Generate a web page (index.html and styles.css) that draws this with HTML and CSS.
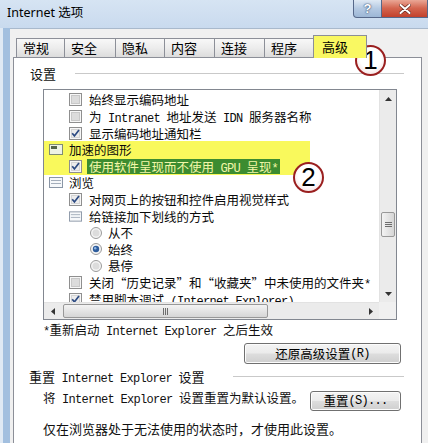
FILE: index.html
```html
<!DOCTYPE html>
<html lang="zh-CN">
<head>
<meta charset="utf-8">
<title>Internet 选项</title>
<link rel="stylesheet" href="styles.css">
</head>
<body>
<div class="window">
  <div class="titlebar">
    <div class="title">Internet 选项</div>
    <div class="caption">
      <div class="cbtn help">?</div>
      <div class="cbtn close">
        <svg width="12" height="10" viewBox="0 0 12 10"><path d="M1.5 1l9 8M10.5 1l-9 8" stroke="#6a2a20" stroke-width="3.4" stroke-linecap="round"/><path d="M1.5 1l9 8M10.5 1l-9 8" stroke="#fff" stroke-width="2" stroke-linecap="round"/></svg>
      </div>
    </div>
  </div>
  <div class="frame">
    <div class="frame-left"></div>
    <div class="dialog">
      <div class="tabs">
        <div class="tab">常规</div>
        <div class="tab">安全</div>
        <div class="tab">隐私</div>
        <div class="tab">内容</div>
        <div class="tab">连接</div>
        <div class="tab">程序</div>
        <div class="tab active">高级</div>
      </div>
      <div class="panel">
        <div class="group-head settings-head"><span>设置</span><span class="rule"></span></div>
        <div class="listbox">
          <div class="list-view">
            <div class="row opt"><svg class="cb" viewBox="0 0 13 13"><rect x=".5" y=".5" width="12" height="12" fill="#f7f7f7" stroke="#8f8f8f"/><rect x="2.5" y="2.5" width="8" height="8" fill="#dcdcdc" stroke="#c8c8c8"/></svg><span class="txt">始终显示编码地址</span></div>
            <div class="row opt"><svg class="cb" viewBox="0 0 13 13"><rect x=".5" y=".5" width="12" height="12" fill="#f7f7f7" stroke="#8f8f8f"/><rect x="2.5" y="2.5" width="8" height="8" fill="#dcdcdc" stroke="#c8c8c8"/></svg><span class="txt">为<span class="en"> Intranet </span>地址发送<span class="en"> IDN </span>服务器名称</span></div>
            <div class="row opt"><svg class="cb" viewBox="0 0 13 13"><rect x=".5" y=".5" width="12" height="12" fill="#f7f7f7" stroke="#8f8f8f"/><rect x="2.5" y="2.5" width="8" height="8" fill="#ececec" stroke="#d4d4d4"/><path d="M3.2 6.3l2.2 2.6 4.6-6" fill="none" stroke="#2c4a82" stroke-width="1.7"/></svg><span class="txt">显示编码地址通知栏</span></div>
            <div class="hl">
              <div class="row cat"><svg class="ico" viewBox="0 0 14 11"><rect x=".5" y=".5" width="13" height="10" fill="#eef2e4" stroke="#7f8c74"/><rect x="2" y="2" width="6" height="3" fill="#55644a"/></svg><span class="txt">加速的图形</span></div>
              <div class="row opt"><svg class="cb" viewBox="0 0 13 13"><rect x=".5" y=".5" width="12" height="12" fill="#f7f7f7" stroke="#8f8f8f"/><rect x="2.5" y="2.5" width="8" height="8" fill="#ececec" stroke="#d4d4d4"/><path d="M3.2 6.3l2.2 2.6 4.6-6" fill="none" stroke="#2c4a82" stroke-width="1.7"/></svg><span class="txt sel">使用软件呈现而不使用<span class="en"> GPU </span>呈现<span class="en">*</span></span></div>
            </div>
            <div class="row cat"><svg class="ico" viewBox="0 0 14 11"><rect x=".5" y=".5" width="13" height="10" fill="#f6f8fa" stroke="#8a96a6"/><path d="M2 3.5h10M2 6.5h10" stroke="#a4aebb"/></svg><span class="txt">浏览</span></div>
            <div class="row opt"><svg class="cb" viewBox="0 0 13 13"><rect x=".5" y=".5" width="12" height="12" fill="#f7f7f7" stroke="#8f8f8f"/><rect x="2.5" y="2.5" width="8" height="8" fill="#ececec" stroke="#d4d4d4"/><path d="M3.2 6.3l2.2 2.6 4.6-6" fill="none" stroke="#2c4a82" stroke-width="1.7"/></svg><span class="txt">对网页上的按钮和控件启用视觉样式</span></div>
            <div class="row opt"><svg class="ico" viewBox="0 0 14 11"><rect x=".5" y=".5" width="13" height="10" fill="#f6f8fa" stroke="#8a96a6"/><path d="M2 3.5h10M2 6.5h10" stroke="#a4aebb"/></svg><span class="txt">给链接加下划线的方式</span></div>
            <div class="row rad"><svg class="rd" viewBox="0 0 12 12"><circle cx="6" cy="6" r="5.5" fill="#f4f4f4" stroke="#9a9a9a"/><circle cx="6" cy="6" r="3.5" fill="#dcdcdc"/></svg><span class="txt">从不</span></div>
            <div class="row rad"><svg class="rd" viewBox="0 0 12 12"><circle cx="6" cy="6" r="5.5" fill="#f4f4f4" stroke="#9a9a9a"/><circle cx="6" cy="6" r="3.2" fill="#2d5c9c"/><circle cx="5.2" cy="5.2" r="1.2" fill="#8fb6e4"/></svg><span class="txt">始终</span></div>
            <div class="row rad"><svg class="rd" viewBox="0 0 12 12"><circle cx="6" cy="6" r="5.5" fill="#f4f4f4" stroke="#9a9a9a"/><circle cx="6" cy="6" r="3.5" fill="#dcdcdc"/></svg><span class="txt">悬停</span></div>
            <div class="row opt"><svg class="cb" viewBox="0 0 13 13"><rect x=".5" y=".5" width="12" height="12" fill="#f7f7f7" stroke="#8f8f8f"/><rect x="2.5" y="2.5" width="8" height="8" fill="#dcdcdc" stroke="#c8c8c8"/></svg><span class="txt">关闭“历史记录”和“收藏夹”中未使用的文件夹<span class="en">*</span></span></div>
            <div class="row opt"><svg class="cb" viewBox="0 0 13 13"><rect x=".5" y=".5" width="12" height="12" fill="#f7f7f7" stroke="#8f8f8f"/><rect x="2.5" y="2.5" width="8" height="8" fill="#ececec" stroke="#d4d4d4"/><path d="M3.2 6.3l2.2 2.6 4.6-6" fill="none" stroke="#2c4a82" stroke-width="1.7"/></svg><span class="txt">禁用脚本调试<span class="en"> (Internet Explorer)</span></span></div>
          </div>
          <div class="vscroll">
            <div class="sbtn"><svg width="7" height="4" viewBox="0 0 7 4"><path d="M0 4L3.5 0 7 4z" fill="#333"/></svg></div>
            <div class="vtrack"><div class="vthumb"><svg width="7" height="6" viewBox="0 0 7 6"><path d="M0 .5h7M0 2.5h7M0 4.5h7" stroke="#6d6d6d"/></svg></div></div>
            <div class="sbtn"><svg width="7" height="4" viewBox="0 0 7 4"><path d="M0 0L3.5 4 7 0z" fill="#333"/></svg></div>
          </div>
          <div class="hscroll">
            <div class="sbtn"><svg width="4" height="7" viewBox="0 0 4 7"><path d="M4 0L0 3.5 4 7z" fill="#333"/></svg></div>
            <div class="htrack"><div class="hthumb"><svg width="6" height="7" viewBox="0 0 6 7"><path d="M.5 0v7M2.5 0v7M4.5 0v7" stroke="#6d6d6d"/></svg></div></div>
            <div class="sbtn"><svg width="4" height="7" viewBox="0 0 4 7"><path d="M0 0L4 3.5 0 7z" fill="#333"/></svg></div>
          </div>
          <div class="corner"></div>
        </div>
        <div class="note"><span class="en">*</span>重新启动<span class="en"> Internet Explorer </span>之后生效</div>
        <div class="btn-row"><div class="btn restore">还原高级设置<span class="en">(R)</span></div></div>
        <div class="group-head reset-head"><span>重置<span class="en"> Internet Explorer </span>设置</span><span class="rule short"></span></div>
        <div class="reset-row"><span class="reset-text">将<span class="en"> Internet Explorer </span>设置重置为默认设置。</span><div class="btn reset">重置<span class="en">(S)...</span></div></div>
        <div class="hint">仅在浏览器处于无法使用的状态时，才使用此设置。</div>
      </div>
    </div>
  </div>
  <div class="marker m1">1</div>
  <div class="marker m2">2</div>
</div>
</body>
</html>
```

FILE: styles.css
```css
* { box-sizing: border-box; }
html, body { margin: 0; padding: 0; }
body {
  width: 428px;
  height: 443px;
  overflow: hidden;
  background: #f0f0f0;
  font-family: "Noto Sans CJK SC", sans-serif;
  color: #111;
}
.window {
  position: relative;
  width: 428px;
  height: 443px;
  display: flex;
  flex-direction: column;
  overflow: hidden;
}
.titlebar {
  height: 28px;
  flex: none;
  display: flex;
  justify-content: space-between;
  align-items: flex-start;
  background: linear-gradient(#d6e4f3, #c9daee);
}
.title {
  font-family: "Noto Sans", "Noto Sans CJK SC", sans-serif;
  font-size: 12.5px;
  line-height: 26px;
  padding-left: 7px;
  color: #000;
}
.caption { display: flex; }
.cbtn {
  height: 18px;
  display: flex;
  align-items: center;
  justify-content: center;
  border: 1px solid #56688a;
  border-top: none;
}
.help {
  width: 29px;
  border-radius: 0 0 0 4px;
  background: linear-gradient(#dfe9f4, #b4c9e2 50%, #9db7d6);
  color: #fff;
  font-family: "Liberation Sans", sans-serif;
  font-weight: bold;
  font-size: 13px;
  line-height: 16px;
  text-shadow: 0 0 2px #34486a, 0 0 1px #34486a;
}
.close {
  width: 46px;
  border-left: none;
  background: linear-gradient(#eaa796, #d4654f 48%, #c2412c);
}
.frame { flex: 1; display: flex; }
.frame-left {
  width: 10px;
  flex: none;
  background: linear-gradient(90deg, #dfe9f4 0 3px, #a2bfdf 3px 10px);
}
.dialog {
  flex: 1;
  background: #f0f0f0;
  border-top: 1px solid #a9b9cc;
  padding: 6px 0 0 3px;
}
.tabs {
  display: flex;
  align-items: flex-end;
  height: 22px;
  padding-left: 3px;
  position: relative;
  z-index: 1;
}
.tab {
  height: 19px;
  border: 1px solid #8c8f98;
  border-bottom: none;
  margin-right: -1px;
  background: linear-gradient(#f8f8f8, #ececec 50%, #dcdcdc);
  font-size: 13px;
  line-height: 18px;
  padding-left: 6px;
  color: #000;
}
.tab:nth-child(1) { width: 49px; }
.tab:nth-child(2) { width: 52px; }
.tab:nth-child(3) { width: 50px; }
.tab:nth-child(4) { width: 51px; }
.tab:nth-child(5) { width: 51px; }
.tab:nth-child(6) { width: 50px; }
.tab.active {
  width: 54px;
  height: 23px;
  margin-bottom: -1px;
  background: #f9f862;
  padding-left: 8px;
  line-height: 21px;
}
.panel {
  width: 409px;
  height: 400px;
  border: 1px solid #8c8f98;
  background: #fff;
}
.group-head {
  display: flex;
  align-items: center;
  font-size: 13px;
  line-height: 16px;
}
.settings-head { padding: 8px 17px 0 16px; }
.settings-head .rule { flex: 1; margin-left: 19px; }
.rule {
  height: 2px;
  border-top: 1px solid #c9c9c9;
  border-bottom: 1px solid #fff;
}
.rule.short { width: 171px; margin-left: auto; margin-right: 17px; margin-top: -3px; }
.listbox {
  margin: 7px 0 0 29px;
  width: 354px;
  height: 231px;
  border: 1px solid #828790;
  display: grid;
  grid-template-columns: 335px 17px;
  grid-template-rows: 212px 17px;
}
.list-view {
  overflow: hidden;
  padding-top: 1.7px;
  font-size: 12.5px;
  color: #0a0a0a;
}
.row {
  height: 16.6px;
  display: flex;
  align-items: center;
  white-space: nowrap;
  line-height: 15px;
}
.txt { display: inline-block; height: 15px; line-height: 15px; }
.row.cat { padding-left: 5px; }
.row.opt { padding-left: 25px; }
.row.rad { padding-left: 46px; }
.cb { width: 13px; height: 13px; margin-right: 7px; flex: none; }
.ico { width: 14px; height: 11px; margin-right: 6px; flex: none; }
.row.opt .ico { width: 13px; margin-right: 7px; }
.rd { width: 12px; height: 12px; margin-right: 6px; flex: none; }
.hl { width: 266px; background: #f9f95c; }
.sel {
  background: #3c8c30;
  color: #f3f7a8;
  padding: 0 2px;
  margin-left: -2px;
}
.en {
  font-family: "Liberation Mono", monospace;
  font-size: 12px;
  letter-spacing: -0.7px;
}
.vscroll {
  display: flex;
  flex-direction: column;
  background: #ebebeb;
  border-left: 1px solid #e2e2e2;
}
.hscroll {
  display: flex;
  background: #ebebeb;
  border-top: 1px solid #e2e2e2;
}
.sbtn {
  width: 16px;
  height: 17px;
  flex: none;
  display: flex;
  align-items: center;
  justify-content: center;
}
.hscroll .sbtn { width: 17px; height: 16px; }
.vtrack { flex: 1; padding: 105px 1px 0 1px; }
.vthumb {
  height: 25px;
  border: 1px solid #989898;
  border-radius: 2px;
  background: linear-gradient(90deg, #f3f3f3, #e4e4e4 50%, #d6d6d6);
  display: flex;
  align-items: center;
  justify-content: center;
}
.htrack { flex: 1; padding: 1px 0 0 2px; }
.hthumb {
  width: 205px;
  height: 14px;
  border: 1px solid #989898;
  border-radius: 2px;
  background: linear-gradient(#f3f3f3, #e4e4e4 50%, #d6d6d6);
  display: flex;
  align-items: center;
  justify-content: center;
}
.corner { background: #f0f0f0; }
.note {
  margin-top: 2px;
  padding-left: 29px;
  font-size: 12.5px;
  line-height: 16px;
}
.btn-row { display: flex; margin-top: 3px; }
.btn {
  height: 21px;
  border: 1px solid #707070;
  border-radius: 3px;
  background: linear-gradient(#f4f4f4, #ebebeb 48%, #dddddd 52%, #cfcfcf);
  box-shadow: inset 0 0 0 1px #fcfcfc;
  display: flex;
  align-items: center;
  justify-content: center;
  font-size: 12.5px;
  line-height: 16px;
  color: #000;
}
.restore { width: 157px; margin-left: auto; margin-right: 20px; }
.reset-head { margin-top: 5px; padding-left: 15px; }
.reset-row {
  display: flex;
  align-items: flex-start;
  margin-top: 3px;
  padding-left: 29px;
  font-size: 12.5px;
  line-height: 16px;
}
.reset { width: 91px; height: 20px; margin: 1px 20px 0 auto; }
.hint {
  margin-top: 10px;
  padding-left: 29px;
  font-size: 13px;
  line-height: 16px;
}
.marker {
  position: absolute;
  width: 31px;
  height: 31px;
  border-radius: 50%;
  border: 2px solid #9a1f1f;
  background: radial-gradient(circle at 50% 42%, #ffffff 50%, #f6e4e4 80%, #e8bcbc 100%);
  font-family: "Liberation Sans", sans-serif;
  font-size: 26px;
  line-height: 27px;
  text-align: center;
  color: #000;
}
.m1 { left: 355px; top: 45px; }
.m2 { left: 293px; top: 162px; }
```
